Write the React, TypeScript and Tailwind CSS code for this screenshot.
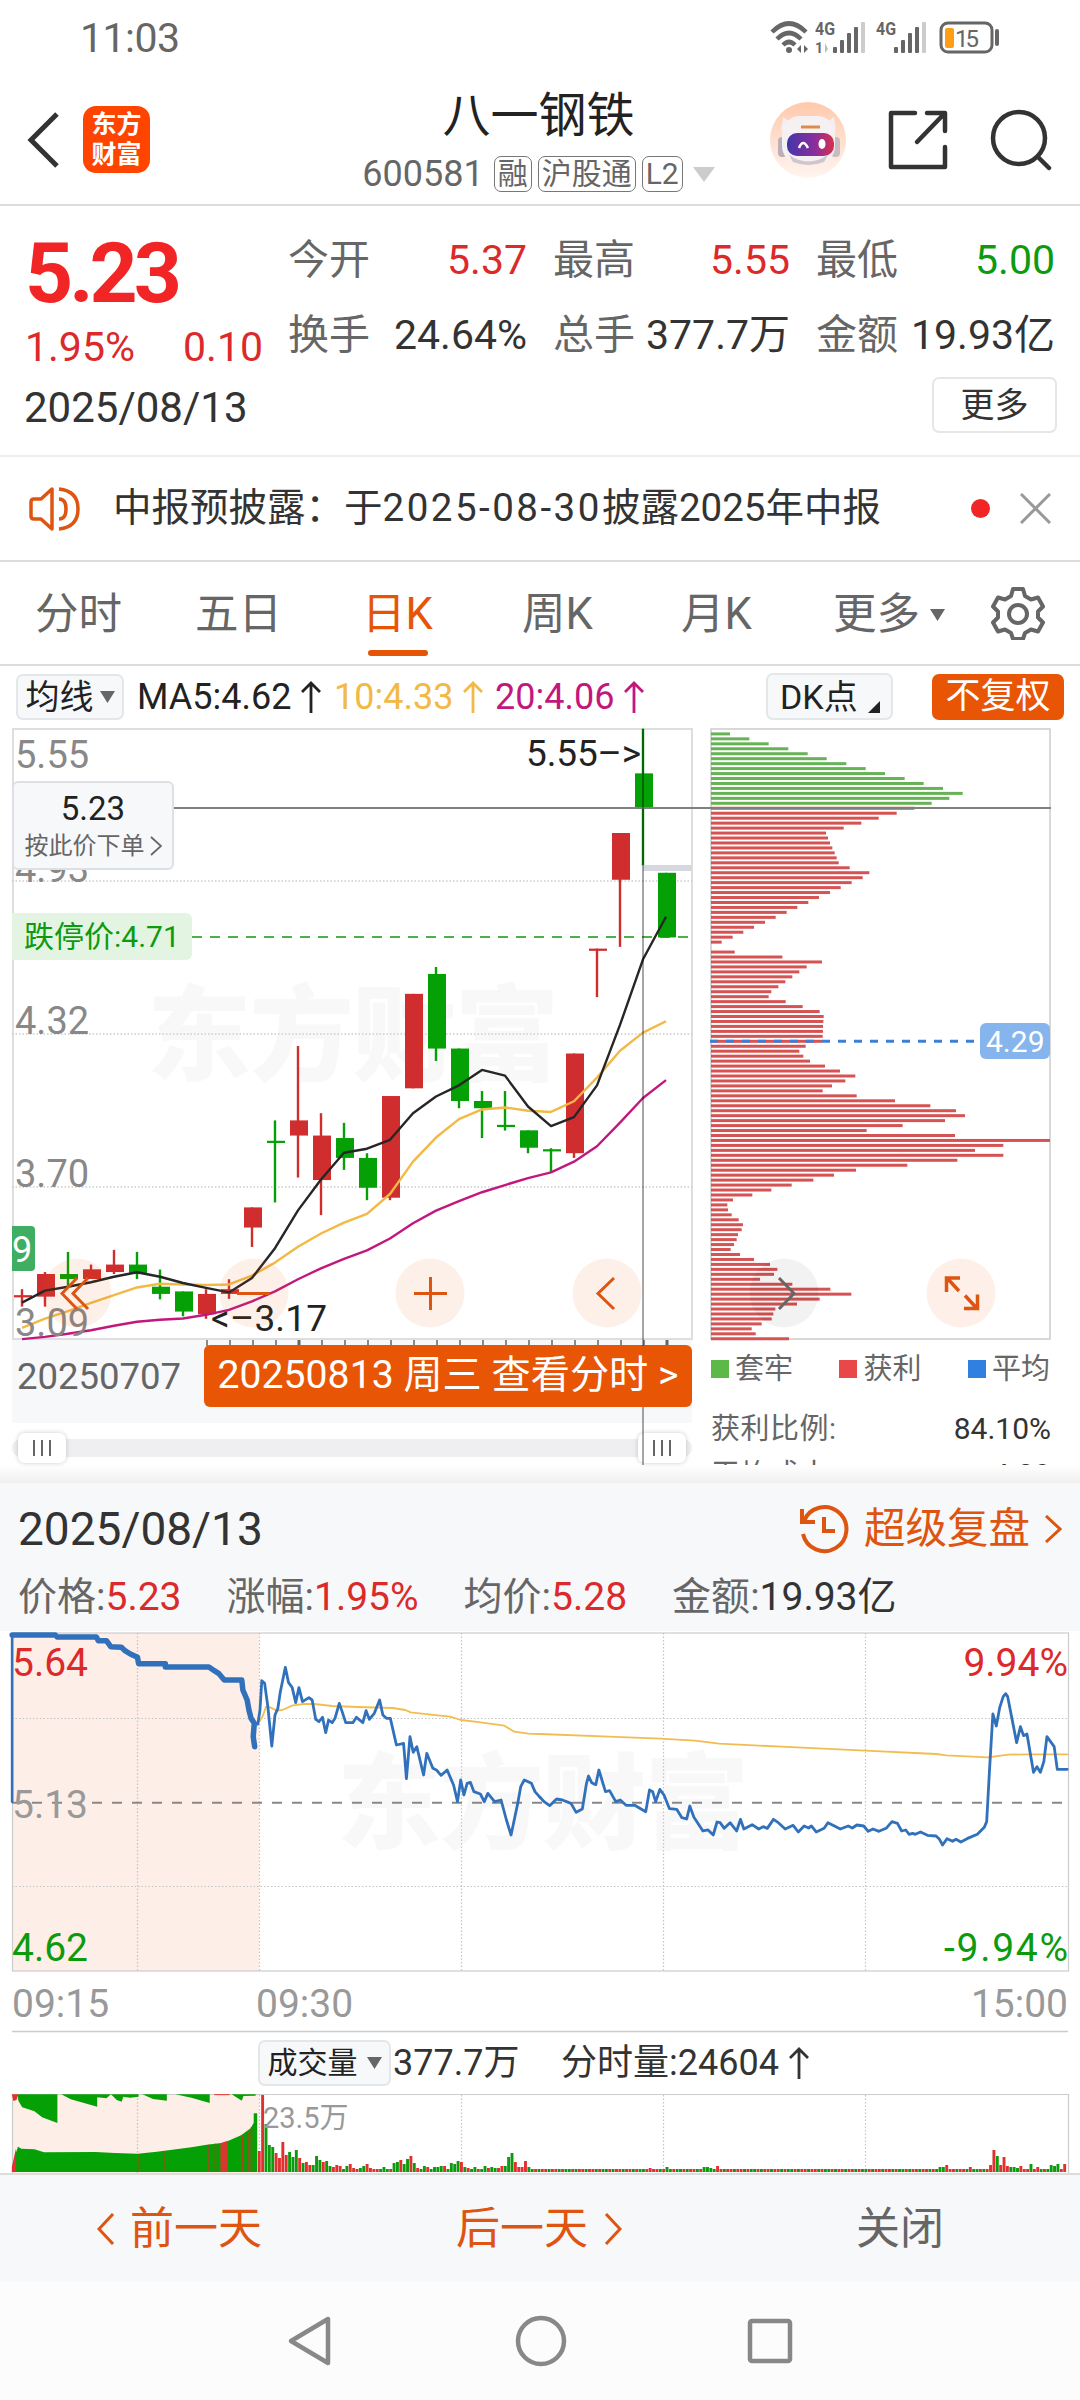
import type { ReactNode } from "react";

type Candle = [open: number, close: number, high: number, low: number];

const CANDLES: Candle[] = [
  [3.27, 3.271, 3.295, 3.225], [3.265, 3.356, 3.364, 3.225], [3.356, 3.336, 3.445, 3.31],
  [3.336, 3.375, 3.394, 3.336], [3.364, 3.394, 3.453, 3.356], [3.394, 3.356, 3.445, 3.336],
  [3.305, 3.276, 3.374, 3.254], [3.286, 3.205, 3.286, 3.186], [3.194, 3.276, 3.295, 3.176],
  [3.276, 3.295, 3.335, 3.256], [3.543, 3.624, 3.624, 3.465], [3.892, 3.886, 3.974, 3.644],
  [3.913, 3.974, 4.273, 3.744], [3.734, 3.913, 4.003, 3.593], [3.903, 3.823, 3.964, 3.775],
  [3.823, 3.703, 3.842, 3.653], [3.663, 4.072, 4.072, 3.653], [4.103, 4.483, 4.483, 4.103],
  [4.563, 4.263, 4.591, 4.213], [4.263, 4.052, 4.263, 4.023], [4.052, 4.023, 4.092, 3.903],
  [3.956, 3.95, 4.092, 3.933], [3.934, 3.864, 3.934, 3.842], [3.858, 3.85, 3.862, 3.765],
  [3.842, 4.243, 4.243, 3.823], [4.656, 4.665, 4.665, 4.47], [4.942, 5.13, 5.13, 4.672],
  [5.37, 5.23, 5.55, 5.0], [4.97, 4.71, 4.97, 4.71],
];

const MA5 = [3.241, 3.289, 3.305, 3.323, 3.345, 3.363, 3.345, 3.32, 3.3, 3.282, 3.34, 3.46, 3.612, 3.736, 3.844, 3.86, 3.896, 4.003, 4.07, 4.115, 4.177, 4.154, 4.03, 3.951, 3.987, 4.115, 4.358, 4.622, 4.793];
const MA10 = [3.139, 3.177, 3.207, 3.24, 3.271, 3.302, 3.317, 3.314, 3.312, 3.314, 3.35, 3.402, 3.466, 3.519, 3.563, 3.598, 3.678, 3.808, 3.905, 3.979, 4.018, 4.026, 4.013, 4.008, 4.051, 4.146, 4.254, 4.327, 4.373];
const MA20 = [3.094, 3.103, 3.116, 3.13, 3.148, 3.164, 3.172, 3.177, 3.192, 3.212, 3.246, 3.286, 3.335, 3.379, 3.417, 3.451, 3.499, 3.56, 3.611, 3.649, 3.685, 3.714, 3.742, 3.765, 3.808, 3.87, 3.965, 4.064, 4.136];

// holdings per price level, top to bottom, 1017 is the full width
const CHIPS = [
  57, 115, 173, 232, 290, 347, 406, 464, 522, 581, 638, 696, 755, 715, 662,
  610, 557, 503, 451, 398, 345, 351, 357, 364, 371, 377, 383, 416, 475, 455, 422, 389, 357, 324, 292, 259, 227, 194, 162, 129, 97, 65, 32, 0,
  71, 214, 333, 287, 265, 244, 223, 202, 181, 173, 224, 275, 326, 338, 337, 336, 336, 335, 334, 284, 265, 277, 297, 342, 387, 433, 403, 363, 335, 437,
  552, 658, 735, 762, 702, 575, 467, 732, 1017, 877, 792, 877, 739, 589, 435, 369, 307, 242, 181, 124, 66, 49, 51, 62, 83, 96, 92, 81, 77, 69, 59, 87, 129, 177, 199, 189, 147, 244, 358, 421, 326, 258, 193, 187, 182, 152, 122, 134, 234,
];
const TRAPPED = 15;

const AUCTION = "34,45 155,45 160,51 270,51 275,62 298,62 310,80 340,82 350,92 365,102 385,112 388,131 463,131 463,141 585,141 600,152 612,160 628,180 677,180 680,210 692,240 697,270 703,295 712,310 709,350 713,380";
const PRICE_AM = "712,310 722,312 728,270 733,182 741,190 750,260 761,378 770,285 778,265 785,215 799,142 808,188 818,202 828,248 837,203 847,245 865,233 874,240 884,298 893,305 903,292 912,338 920,300 930,308 938,295 950,250 958,275 968,308 988,308 998,292 1016,308 1025,272 1034,298 1048,280 1063,240 1072,285 1082,295 1093,295 1110,375 1130,370 1138,476 1148,350 1157,397 1167,380 1186,465 1195,400 1212,445 1222,450 1235,466 1252,450 1270,495 1281,545 1290,480 1299,525 1308,490 1317,487 1327,515 1345,522 1356,545 1366,520 1385,545 1403,540 1418,600 1431,645 1450,548 1458,500 1468,480 1488,490 1498,515 1512,532";
const PRICE_PM = "0,532 12,545 28,557 48,537 65,540 90,550 105,577 123,567 135,490 141,468 150,488 162,494 171,450 190,515 202,512 220,545 233,540 250,556 275,556 307,575 318,510 327,515 336,545 348,508 360,525 376,566 397,568 412,593 426,597 435,558 447,592 465,620 473,633 488,630 503,645 514,606 523,608 535,625 552,608 571,633 582,598 592,627 616,614 635,627 648,620 660,625 678,598 692,608 712,627 735,616 750,636 767,618 780,624 788,618 802,636 825,625 836,608 855,618 872,627 895,618 907,624 920,615 940,618 953,634 967,627 984,634 1005,625 1022,605 1038,610 1050,633 1062,630 1072,643 1082,640 1090,643 1105,636 1125,646 1150,648 1160,658 1169,675 1182,656 1198,664 1208,658 1222,666 1240,656 1270,643 1290,622 1297,605 1305,455 1315,282 1325,318 1335,262 1345,230 1352,221 1358,230 1384,368 1395,320 1404,347 1414,342 1433,457 1443,440 1453,457 1463,425 1472,350 1493,380 1502,448 1531,448";
const AVG_AM = "726,305 735,290 745,260 757,262 775,272 790,270 820,256 850,252 880,252 930,258 1000,261 1100,264 1135,270 1150,277 1200,283 1260,290 1290,300 1330,305 1412,317 1440,335 1480,341 1512,342";
const AVG_PM = "0,342 200,350 350,356 450,362 520,371 700,380 945,392 1150,402 1180,406 1300,412 1360,404 1420,403 1531,403";

// minute volumes after the open, height in px followed by r / g
const VOLUME = "21r 77r 48g 27g 25g 19r 14r 30r 17r 20g 15g 22g 14r 9g 10r 7r 7g 16g 12g 10r 11g 6g 5r 7r 6r 3g 6g 8r 4r 3r 4g 6g 8r 4r 3r 3r 3g 5g 3g 3r 9g 10g 12r 8g 13g 16r 9g 4r 3g 6g 5r 3g 5g 5g 6g 6r 3g 9g 8g 11g 10r 5g 4r 3g 5g 3r 3g 6g 4r 5g 4g 4r 6r 6g 15g 19g 10r 5r 5r 11r 5g".split(" ");
const VOLUME_LATE: Record<number, string> = {
  116: "4r", 121: "5g", 132: "5g", 133: "5g", 134: "4g", 136: "6r", 202: "5g", 203: "5g", 204: "7r", 211: "5r",
  217: "7r", 218: "22r", 219: "16g", 220: "7r", 221: "15r", 222: "6r", 223: "5g", 224: "5g", 225: "4g", 226: "6r", 229: "8g",
  231: "5r", 235: "7g", 236: "6g", 237: "8g", 239: "8r",
};

const RED = "#d02e2e";
const GREEN = "#05a005";
const ORANGE = "#dd5510";

const priceY = (p: number) => 728.6 + (5.55 - p) * 248.6;
const candleX = (i: number) => 22 + 23 * i;
const maPoints = (ma: number[]) => ma.map((p, i) => `${candleX(i)},${priceY(p)}`).join(" ");

function Caret({ className = "" }: { className?: string }) {
  return (
    <svg className={className} width="15" height="12" viewBox="0 0 15 12">
      <path d="M0 0h15L7.500 12z" fill="currentColor" />
    </svg>
  );
}

function UpArrow() {
  return (
    <svg width="20" height="32" viewBox="0 0 20 32" fill="none" stroke="currentColor" strokeWidth="2.800">
      <path d="M10 32V2M1 11l9-9 9 9" />
    </svg>
  );
}

function Chevron({ left = false }: { left?: boolean }) {
  return (
    <svg width="18" height="32" viewBox="0 0 18 32" fill="none" stroke="currentColor" strokeWidth="3">
      <path d={left ? "M16 1L2 16l14 15" : "M2 1l14 15L2 31"} />
    </svg>
  );
}

function StatusBar() {
  return (
    <div className="flex h-[72px] items-center justify-between pt-1 pl-[80px] pr-[80px] text-[#666]">
      <span className="text-[41px] leading-none tracking-[-0.5px]">11:03</span>
      <svg width="230" height="36" viewBox="769 19 230 36">
        <g fill="none" stroke="#666" strokeWidth="4.500">
          <path d="M771 31q17-17 34 0M776 38q12-12 24 0M782 44q6-6 12 0" />
        </g>
        <circle cx="788" cy="49" r="3" fill="#666" />
        <path d="M796 48l4-4v8zM807 48l-4-4v8z" fill="#666" />
        <g fill="#666" fontFamily="Roboto, sans-serif" fontWeight="700" fontSize="18">
          <text x="814" y="34" textLength="20" lengthAdjust="spacingAndGlyphs">4G</text>
          <text x="875" y="34" textLength="20" lengthAdjust="spacingAndGlyphs">4G</text>
          <text x="814" y="52" fontSize="14">1</text>
        </g>
        <path d="M824 42v10l3-4z" fill="#bbb" />
        {[834, 895].map((x) => (
          <g key={x} fill="#666">
            <rect x={x - 2} y="46" width="4" height="6" rx="1" />
            <rect x={x + 5} y="39" width="4" height="13" rx="1" />
            <rect x={x + 12} y="32" width="4" height="20" rx="1" />
            <rect x={x + 19} y="26" width="4" height="26" rx="1" />
            <rect x={x + 26} y="21" width="4" height="31" rx="1" fill="#ccc" />
          </g>
        ))}
        <rect x="940" y="22" width="51" height="29" rx="7" fill="none" stroke="#666" strokeWidth="3" />
        <rect x="944" y="27" width="9" height="20" rx="2" fill="#ff9d14" />
        <rect x="994" y="28" width="4" height="17" rx="2" fill="#666" />
        <text x="954" y="46" fill="#666" fontFamily="Roboto, sans-serif" fontSize="24" textLength="24">15</text>
      </svg>
    </div>
  );
}

function Robot() {
  return (
    <svg width="76" height="76" viewBox="0 0 76 76">
      <defs>
        <linearGradient id="halo" x1="0" y1="0" x2="0" y2="1">
          <stop offset="0" stopColor="#ffc9ac" />
          <stop offset="1" stopColor="#fff5f0" />
        </linearGradient>
        <linearGradient id="visor">
          <stop offset="0" stopColor="#4436a8" />
          <stop offset=".6" stopColor="#8a2e9c" />
          <stop offset="1" stopColor="#d8304e" />
        </linearGradient>
      </defs>
      <circle cx="38" cy="38" r="38" fill="url(#halo)" />
      <path d="M11 29l2-14 10 7zM66 29l-2-14-10 7z" fill="#f4eef0" />
      <rect x="8" y="35" width="9" height="20" rx="4" fill="#b9b0b8" />
      <rect x="61" y="35" width="9" height="20" rx="4" fill="#c9bcc0" />
      <rect x="12" y="14" width="53" height="48" rx="18" fill="#f5f1f3" />
      <path d="M19 53q19 13 39 0l-4 7q-16 6-31 0z" fill="#cfc5cc" />
      <rect x="17" y="31" width="47" height="23" rx="10" fill="url(#visor)" />
      <path d="M29 46q4-10 9 0" fill="none" stroke="#fff" strokeWidth="2.500" />
      <ellipse cx="52" cy="42" rx="3.500" ry="5" fill="#fff" />
      <path d="M31 25h19" stroke="#e08a4a" strokeWidth="3" />
    </svg>
  );
}

function Badge({ children }: { children: ReactNode }) {
  return (
    <span className="flex h-9 items-center rounded-[7px] border-[1.5px] border-[#777] px-[3px] text-[30px] leading-none">
      {children}
    </span>
  );
}

function Header() {
  return (
    <header className="flex h-[134px] items-start justify-between border-b-2 border-[#dcdcdc] pl-[27px] pr-[28px] text-[#333]">
      <div className="flex w-[280px] items-center gap-[23px] pt-[34px]">
        <svg width="33" height="56" viewBox="0 0 33 56" fill="none" stroke="#333" strokeWidth="5">
          <path d="M30 2L4 28l26 26" />
        </svg>
        <div className="flex h-[67px] w-[67px] flex-col items-center justify-center rounded-[13px] bg-[#ff4400] text-[25px] font-bold leading-[30px] text-white">
          <span>东方</span>
          <span>财富</span>
        </div>
      </div>
      <div className="flex flex-col items-center pt-[20px]">
        <h1 className="text-[48px] leading-[48px] text-[#222]">八一钢铁</h1>
        <div className="mt-[16px] flex items-center gap-[6px] text-[#666]">
          <span className="mr-1 text-[36px] leading-none">600581</span>
          <Badge>融</Badge>
          <Badge>沪股通</Badge>
          <Badge>L2</Badge>
          <svg className="ml-1" width="22" height="15" viewBox="0 0 22 15">
            <path d="M0 0h22L11 15z" fill="#ccc" />
          </svg>
        </div>
      </div>
      <div className="flex w-[282px] items-center justify-between pt-[30px]">
        <Robot />
        <svg width="62" height="62" viewBox="0 0 62 62" fill="none" stroke="#333" strokeWidth="4.500" strokeLinecap="round" strokeLinejoin="round">
          <path d="M28 4H4v54h54V38M40 4h18v18M57 5L30 33" />
        </svg>
        <svg width="62" height="62" viewBox="0 0 62 62" fill="none" stroke="#333" strokeWidth="4.500" strokeLinecap="round">
          <circle cx="29" cy="29" r="26" />
          <path d="M48 48l11 11" />
        </svg>
      </div>
    </header>
  );
}

function Stat({ label, value, color = "text-[#333]" }: { label: string; value: string; color?: string }) {
  return (
    <div className="flex items-center justify-between">
      <span className="text-[#666]">{label}</span>
      <span className={color}>{value}</span>
    </div>
  );
}

function Quote() {
  return (
    <section className="h-[251px] border-b-2 border-[#eee] text-[41px] leading-[48px]">
      <div className="flex">
        <div className="w-[288px] pl-[25px] pt-[30px] text-[#dc2a2a]">
          <div className="text-[84px] font-bold leading-[76px] tracking-[-4px] text-[#f12525]">5.23</div>
          <div className="mt-[11px] flex w-[238px] justify-between">
            <span>1.95%</span>
            <span>0.10</span>
          </div>
        </div>
        <div className="grid h-[152px] w-[767px] grid-cols-[239px_237px_239px] gap-x-[26px] gap-y-[27px] pt-[30px]">
          <Stat label="今开" value="5.37" color="text-[#dc2a2a]" />
          <Stat label="最高" value="5.55" color="text-[#dc2a2a]" />
          <Stat label="最低" value="5.00" color="text-[#0d9a0d]" />
          <Stat label="换手" value="24.64%" />
          <Stat label="总手" value="377.7万" />
          <Stat label="金额" value="19.93亿" />
        </div>
      </div>
      <div className="mt-[5px] flex items-center justify-between pl-[24px] pr-[23px] pt-px text-[#333]">
        <span className="pt-[5px] text-[42px]">2025/08/13</span>
        <button className="h-[56px] w-[125px] rounded-[7px] border-2 border-[#e6e6e6] text-[34px] leading-none">更多</button>
      </div>
    </section>
  );
}

function Notice() {
  return (
    <section className="flex h-[105px] items-center border-b-2 border-[#dcdcdc] pl-[29px] pr-[29px]">
      <svg width="52" height="46" viewBox="0 0 52 46" fill="none" stroke={ORANGE} strokeWidth="3.500">
        <path d="M23 3v40L12 33H5q-3 0-3-3V16q0-3 3-3h7z" strokeLinejoin="round" />
        <path d="M30 13q7 0 7 10t-7 10M30 3q19 2 19 20T30 43" />
      </svg>
      <p className="ml-[32px] whitespace-nowrap text-[38.500px] leading-none text-[#333]">
        中报预披露：于<span className="tracking-[2.500px]">2025-08-30</span>披露2025年中报
      </p>
      <span className="ml-auto h-[19px] w-[19px] rounded-full bg-[#f12525]" />
      <svg className="ml-[30px]" width="31" height="31" viewBox="0 0 31 31" stroke="#999" strokeWidth="3">
        <path d="M1 1l29 29M30 1L1 30" />
      </svg>
    </section>
  );
}

function Tabs() {
  return (
    <nav className="flex h-[104px] items-center border-b-2 border-[#dcdcdc] pl-[35px] pt-[4px] text-[43.500px] leading-none text-[#666]">
      <span className="w-[160px]">分时</span>
      <span className="w-[167px]">五日</span>
      <span className="relative w-[160px] text-[#e65505]">
        日K
        <i className="absolute left-[6px] top-[57px] h-[6px] w-[60px] rounded-full bg-[#e65505]" />
      </span>
      <span className="w-[159px]">周K</span>
      <span className="w-[152px]">月K</span>
      <span className="flex w-[158px] items-center gap-[10px]">
        更多
        <Caret />
      </span>
      <svg className="mb-[4px]" width="54" height="54" viewBox="0 0 54 54" fill="none" stroke="#666" strokeWidth="4">
        <path d="M22 3h10l2 7 6 3.500 7-2 5 9-5 5v6l5 5-5 9-7-2-6 3.500-2 6H22l-2-6-6-3.500-7 2-5-9 5-5v-6l-5-5 5-9 7 2 6-3.500z" strokeLinejoin="round" />
        <circle cx="27" cy="28" r="9" />
      </svg>
    </nav>
  );
}

function IndicatorBar() {
  return (
    <div className="flex h-[61px] items-center pl-4 pr-4 text-[36px] leading-none">
      <span className="flex h-[46px] w-[108px] items-center justify-center gap-[6px] rounded-[7px] border-2 border-[#e4e7ea] bg-[#f7f8fa] text-[34px] text-[#222]">
        均线
        <Caret className="text-[#666]" />
      </span>
      <span className="ml-[13px] flex w-[197px] items-center gap-[10px] text-[#222]">MA5:4.62<UpArrow /></span>
      <span className="flex w-[161px] items-center gap-[10px] text-[#f2b945]">10:4.33<UpArrow /></span>
      <span className="flex items-center gap-[10px] text-[#c2187e]">20:4.06<UpArrow /></span>
      <span className="ml-auto flex h-[47px] w-[127px] items-center rounded-[7px] border-2 border-[#e4e7ea] bg-[#f7f8fa] pl-[12px] text-[34px] text-[#222]">
        DK点
        <svg className="ml-[10px] mt-[20px]" width="12" height="12" viewBox="0 0 12 12">
          <path d="M12 0v12H0z" fill="#222" />
        </svg>
      </span>
      <span className="ml-[39px] flex h-[46px] w-[132px] items-center justify-center rounded-[7px] bg-[#e85505] text-[35px] text-white">不复权</span>
    </div>
  );
}

function KChart() {
  return (
    <svg className="block" width="700" height="619" viewBox="0 727 700 619" fontFamily="Roboto, 'Noto Sans CJK SC', sans-serif">
      <text x="147" y="1073" fontSize="104" fontWeight="900" fill="#f8f8f8" textLength="412">东方财富</text>
      <rect x="13" y="729" width="679" height="610" fill="none" stroke="#dedede" strokeWidth="2" />
      {[881, 1034, 1187].map((y) => (
        <path key={y} d={`M12 ${y}H692`} stroke="#ccc" strokeWidth="1.500" strokeDasharray="1.500 2" />
      ))}
      <g fontSize="38" fill="#888">
        <text x="15" y="768">5.55</text>
        <text x="15" y="882">4.93</text>
        <text x="15" y="1034">4.32</text>
        <text x="15" y="1187">3.70</text>
      </g>
      <path d="M174 937H692" stroke="#4db04d" strokeWidth="1.800" strokeDasharray="10 8" />

      {CANDLES.map(([open, close, high, low], i) => {
        const color = close > open ? RED : GREEN;
        const top = priceY(Math.max(open, close));
        const h = Math.max(2.2, priceY(Math.min(open, close)) - top);
        return (
          <g key={i} fill={color}>
            <rect x={candleX(i) - 1.2} y={priceY(high)} width="2.400" height={priceY(low) - priceY(high)} />
            <rect x={candleX(i) - 8} y={top} width="18" height={h} />
          </g>
        );
      })}

      <rect x="643" y="865" width="49" height="6" fill="#d5d8de" />
      <g fill="none" strokeWidth="2.400" strokeLinejoin="round">
        <polyline points={maPoints(MA20)} stroke="#c2187e" />
        <polyline points={maPoints(MA10)} stroke="#f2b945" />
        <polyline points={maPoints(MA5)} stroke="#262626" />
      </g>

      <g fontSize="37" fill="#222">
        <text x="526" y="766" textLength="115">5.55–&gt;</text>
        <text x="211" y="1331" textLength="116">&lt;–3.17</text>
      </g>
      <text x="15" y="1336" fontSize="38" fill="#888">3.09</text>
      <path d="M12 1226h19q4 0 4 4v37q0 4-4 4H12z" fill="#3fae62" />
      <text x="12" y="1262" fontSize="36" fill="#fff">9</text>

      <g fill="#e65505" fillOpacity="0.085">
        {[77, 254, 430, 607].map((x) => (
          <circle key={x} cx={x} cy="1293" r="34.500" />
        ))}
      </g>
      <g fill="none" stroke={ORANGE} strokeWidth="3">
        <path d="M77 1278l-15 15.500 15 15.500M88 1278l-15 15.500 15 15.500" />
        <path d="M237 1293.500h33M414 1293.500h33M430.500 1277v33" />
        <path d="M614 1278l-16 15.500 16 15.500" />
      </g>
      {Array.from({ length: 21 }, (_, k) => 207 + 23 * k).map((x) => (
        <path key={x} d={`M${x} 1340v6`} stroke="#666" strokeWidth={x === 299 || x === 667 ? 3 : 1.5} />
      ))}
    </svg>
  );
}

function SliderHandle() {
  return (
    <span className="flex h-[30px] w-[48px] items-center justify-center gap-[6px] rounded-[7px] bg-white shadow-[0_0_5px_rgba(0,0,0,0.2)]">
      <i className="h-4 w-[2px] bg-[#666]" />
      <i className="h-4 w-[2px] bg-[#666]" />
      <i className="h-4 w-[2px] bg-[#666]" />
    </span>
  );
}

function KPanel() {
  return (
    <div className="relative h-[738px] w-[700px]">
      <div className="h-[613px]"><KChart /></div>
      <div className="ml-3 flex h-[83px] w-[680px] items-start justify-between bg-[#f7f8fa] pl-[5px] text-[36.500px] leading-none text-[#666]">
        <span className="pt-[19px]">20250707</span>
        <span className="mt-[5px] flex h-[62px] w-[488px] items-center justify-center whitespace-nowrap rounded-[6px] bg-[#e85505] text-[39.200px] text-white">20250813 周三 查看分时 &gt;</span>
      </div>
      <div className="ml-3 mt-[16px] flex h-[18px] w-[680px] items-center justify-between rounded-full bg-[#efeff1] px-[6px]">
        <SliderHandle />
        <SliderHandle />
      </div>
      <div className="absolute left-[12px] top-[186px] flex h-[47px] w-[180px] items-center rounded-r-[6px] bg-[#e3f4e3] pl-[12px] text-[30px] leading-none text-[#0d9a0d]">跌停价:4.71</div>
      <div className="absolute left-[12px] top-[54px] flex h-[89px] w-[162px] flex-col items-center rounded-[6px] border-2 border-[#dde0e4] bg-[#f7f8fa] pt-[8px]">
        <span className="text-[33px] leading-[36px] text-[#222]">5.23</span>
        <span className="mt-[3px] flex items-center gap-[5px] text-[24px] leading-[32px] text-[#666]">
          按此价下单
          <svg width="12" height="20" viewBox="0 0 12 20" fill="none" stroke="#666" strokeWidth="1.800">
            <path d="M1 1l10 9-10 9" />
          </svg>
        </span>
      </div>
    </div>
  );
}

function Legend({ swatch, label }: { swatch: string; label: string }) {
  return (
    <span className="flex items-center gap-[6px]">
      <i className={`h-[18px] w-[18px] ${swatch}`} />
      {label}
    </span>
  );
}

function ChipPanel() {
  return (
    <div className="ml-[10px] h-[738px] w-[341px] overflow-hidden text-[29px] leading-[40px] text-[#666]">
      <svg className="block" width="341" height="614" viewBox="710 727 341 614" fontFamily="Roboto, sans-serif">
        <rect x="711" y="729" width="339" height="610" fill="none" stroke="#ccc" strokeWidth="1.500" />
        {CHIPS.map((len, i) => (
          <rect key={i} x="711" y={732.4 + i * 4.958} width={len / 3} height="3" fill={i < TRAPPED ? "#66b355" : "#d65353"} />
        ))}
        <path d="M710 1041.300H975" stroke="#3f7fd6" strokeWidth="3" strokeDasharray="8 8" />
        <rect x="980" y="1023" width="70" height="36" rx="6" fill="#86b4ec" />
        <text x="986" y="1052" fontSize="30" fill="#fff">4.29</text>
        <circle cx="784" cy="1293" r="34.500" fill="#000" fillOpacity="0.05" />
        <path d="M779 1278l15 15.500-15 15.500" fill="none" stroke="#666" strokeWidth="3" />
        <circle cx="961" cy="1293" r="34.500" fill="#fef0e8" />
        <path d="M960 1278h-13.500v14M947 1278l12 13M964 1308.500h13.500v-14M977 1308.500l-12-13" fill="none" stroke={ORANGE} strokeWidth="3.500" />
      </svg>
      <div className="mt-[8px] flex justify-between pl-px pr-px">
        <Legend swatch="bg-[#5cb848]" label="套牢" />
        <Legend swatch="bg-[#e94848]" label="获利" />
        <Legend swatch="bg-[#3080e0]" label="平均" />
      </div>
      <div className="mt-[20px] flex justify-between pl-px">
        <span className="tracking-[0.500px]">获利比例:</span>
        <span className="text-[30px] text-[#333]">84.10%</span>
      </div>
      <div className="mt-[6px] flex justify-between pl-px">
        <span className="tracking-[0.500px]">平均成本:</span>
        <span className="text-[30px] text-[#333]">4.29</span>
      </div>
    </div>
  );
}

function DayStat({ label, value, up = false }: { label: string; value: string; up?: boolean }) {
  return (
    <span className="text-[#666]">
      {label}:<b className={up ? "font-normal text-[#dc2a2a]" : "font-normal text-[#333]"}>{value}</b>
    </span>
  );
}

function IntradayChart() {
  return (
    <svg className="block" width="1080" height="402" viewBox="0 1631 1080 402" fontFamily="Roboto, 'Noto Sans CJK SC', sans-serif">
      <rect x="12" y="1633" width="247" height="338" fill="#fdeee8" />
      <text x="337" y="1841" fontSize="104" fontWeight="900" fill="#f8f8f8" textLength="412">东方财富</text>
      <rect x="12.500" y="1633" width="1056" height="338" fill="none" stroke="#ccc" strokeWidth="1.200" />
      <g stroke="#c4c4c4" strokeWidth="1.200" strokeDasharray="1.500 2">
        <path d="M137.500 1633v338M259.500 1633v338M461.500 1633v338M663.500 1633v338M865.500 1633v338" />
        <path d="M12 1718.500H1068M12 1886.500H1068" />
      </g>
      <path d="M12 1802.700H1068" stroke="#888" strokeWidth="2" strokeDasharray="10 10" />
      <g fill="none" strokeLinejoin="round" strokeLinecap="round">
        <g transform="translate(0 1620) scale(0.35714 0.33333)">
          <polyline points={AVG_AM} stroke="#f2bd50" strokeWidth="1.800" vectorEffect="non-scaling-stroke" />
          <path d="M34 545V45" stroke="#3171bb" strokeWidth="2.600" vectorEffect="non-scaling-stroke" />
          <polyline points={AUCTION} stroke="#3171bb" strokeWidth="5.500" vectorEffect="non-scaling-stroke" />
          <polyline points={PRICE_AM} stroke="#3171bb" strokeWidth="2.800" vectorEffect="non-scaling-stroke" />
        </g>
        <g transform="translate(540 1620) scale(0.34439 0.33333)">
          <polyline points={AVG_PM} stroke="#f2bd50" strokeWidth="1.800" vectorEffect="non-scaling-stroke" />
          <polyline points={PRICE_PM} stroke="#3171bb" strokeWidth="2.800" vectorEffect="non-scaling-stroke" />
        </g>
      </g>
      <g fontSize="39">
        <text x="12" y="1676" fill="#dc2a2a">5.64</text>
        <text x="12" y="1818" fill="#999">5.13</text>
        <text x="12" y="1961" fill="#0d9a0d">4.62</text>
        <text x="1068" y="1676" fill="#dc2a2a" textAnchor="end">9.94%</text>
        <text x="1068" y="1961" fill="#0d9a0d" textAnchor="end" textLength="124">-9.94%</text>
        <g fill="#999">
          <text x="12" y="2017">09:15</text>
          <text x="256" y="2017">09:30</text>
          <text x="1068" y="2017" textAnchor="end">15:00</text>
        </g>
      </g>
      <path d="M12 2031.500H1068" stroke="#ccc" strokeWidth="1.500" />
    </svg>
  );
}

function VolumeChart() {
  const bars = Array.from({ length: 240 }, (_, i) => VOLUME[i] ?? VOLUME_LATE[i] ?? ((i * 7) % 11 < 6 ? "3r" : "3g"));
  return (
    <svg className="block" width="1080" height="80" viewBox="0 2093 1080 80" fontFamily="Roboto, 'Noto Sans CJK SC', sans-serif">
      <rect x="12" y="2094" width="247" height="79" fill="#fdeee8" />
      <path d="M12.500 2173V2094.500H1068.500V2173" fill="none" stroke="#ccc" strokeWidth="1.200" />
      <path d="M137.500 2095v78M259.500 2095v78M461.500 2095v78M663.500 2095v78M865.500 2095v78" stroke="#c4c4c4" strokeWidth="1.200" strokeDasharray="1.500 2" />
      <g transform="translate(0 2020) scale(0.3827 0.33333)">
        <g fill={GREEN}>
          <path d="M38 456V410L47 380 56 386 90 388 115 397 250 396 300 399 360 401 410 395 500 382 540 374 585 368 630 346 655 325 663 308V280H672V456z" />
          <path d="M46 223L48 242 58 262 90 274 110 292 150 309V223zM160 223L185 238 254 260V232L278 235 290 223 305 240 318 245 322 230 340 233 362 230V223zM372 223L400 237 436 242V223zM458 223L500 233 548 249V223zM605 223L632 242 636 228 668 227V223z" />
        </g>
        <path d="M31 456V440L42 385V456zM31 223L35 243 43 240 48 223z" fill="#e62e2e" />
        <path d="M576 456V370L595 362V456z" fill="#d63a2e" />
        <path d="M364 456V402M428 456V393M546 456V374M563 456V371M634 456V345M648 456V333M657 456V322" stroke="#a5481c" strokeWidth="4" />
        <path d="M560 224H600" stroke="#e62e2e" strokeWidth="3" />
      </g>
      {bars.map((bar, i) => {
        const h = parseInt(bar);
        return <rect key={i} x={257.8 + i * 3.37} y={2172 - h} width="2.900" height={h} fill={bar.endsWith("r") ? "#e03030" : "#0d9a0d"} />;
      })}
      <text x="263" y="2128" fontSize="29" fill="#999">23.5万</text>
    </svg>
  );
}

function DayPanel() {
  return (
    <section>
      <div className="h-[18px] bg-gradient-to-b from-white to-[#efefef]" />
      <div className="h-[148px] bg-[#f7f8fa] pl-[18px] pr-[18px] pt-[19px]">
        <div className="flex h-[54px] items-center justify-between leading-none">
          <span className="text-[46px] text-[#333]">2025/08/13</span>
          <span className="flex items-center text-[41.500px] text-[#dd5510]">
            <svg className="mr-[15px]" width="50" height="50" viewBox="0 0 50 50" fill="none" stroke="currentColor" strokeWidth="4">
              <path d="M5 17A22 22 0 1 1 4 30M3 5v13h13M25 13v14h11" />
            </svg>
            <span className="mr-[14px]">超级复盘</span>
            <svg width="18" height="28" viewBox="0 0 18 28" fill="none" stroke="currentColor" strokeWidth="3">
              <path d="M2 1l14 13L2 27" />
            </svg>
          </span>
        </div>
        <div className="mt-[18px] flex gap-[45px] text-[39px] leading-[46px]">
          <DayStat label="价格" value="5.23" up />
          <DayStat label="涨幅" value="1.95%" up />
          <DayStat label="均价" value="5.28" up />
          <DayStat label="金额" value="19.93亿" />
        </div>
      </div>
      <IntradayChart />
      <div className="flex h-[60px] items-center pl-[258px] text-[36px] leading-none text-[#333]">
        <span className="flex h-[46px] w-[133px] items-center justify-center gap-[9px] rounded-[7px] border-2 border-[#e4e7ea] bg-[#f7f8fa] text-[30px] text-[#222]">
          成交量
          <Caret className="text-[#666]" />
        </span>
        <span className="ml-[2px] w-[168px]">377.7万</span>
        <span className="flex items-center gap-[10px]">分时量:24604<UpArrow /></span>
      </div>
      <VolumeChart />
    </section>
  );
}

function DaySwitcher() {
  return (
    <div className="flex h-[109px] items-center border-t-2 border-[#dcdcdc] bg-[#f7f8fa] pl-[97px] text-[44px] leading-none text-[#dd5510]">
      <span className="flex w-[359px] items-center gap-[15px]"><Chevron left />前一天</span>
      <span className="flex w-[400px] items-center gap-[16px]">后一天<Chevron /></span>
      <span className="text-[#666]">关闭</span>
    </div>
  );
}

function SystemNav() {
  return (
    <div className="flex h-[118px] items-center justify-center bg-[#fcfcfc]">
      <svg className="mr-[182px]" width="46" height="52" viewBox="0 0 46 52" fill="none" stroke="#888" strokeWidth="4.500" strokeLinejoin="round">
        <path d="M41 4v44L4 26z" />
      </svg>
      <svg className="mr-[180px]" width="52" height="52" viewBox="0 0 52 52" fill="none" stroke="#888" strokeWidth="4.500">
        <circle cx="26" cy="26" r="23" />
      </svg>
      <svg width="46" height="46" viewBox="0 0 46 46" fill="none" stroke="#888" strokeWidth="4.500">
        <rect x="3" y="3" width="40" height="40" rx="2" />
      </svg>
    </div>
  );
}

export default function App() {
  return (
    <div className="h-[2400px] w-[1080px] overflow-hidden bg-white font-['Roboto','Noto_Sans_CJK_SC',sans-serif]">
      <StatusBar />
      <Header />
      <Quote />
      <Notice />
      <Tabs />
      <IndicatorBar />
      <div className="relative flex">
        <KPanel />
        <ChipPanel />
        {/* crosshair */}
        <div className="absolute left-[174px] top-[80px] h-[2px] w-[877px] bg-[#808080]" />
        <div className="absolute left-[642px] top-[2px] h-[617px] w-[2px] bg-black/35" />
        <div className="absolute left-[642px] top-[680px] h-[58px] w-[2px] bg-black/35" />
      </div>
      <DayPanel />
      <DaySwitcher />
      <SystemNav />
    </div>
  );
}
